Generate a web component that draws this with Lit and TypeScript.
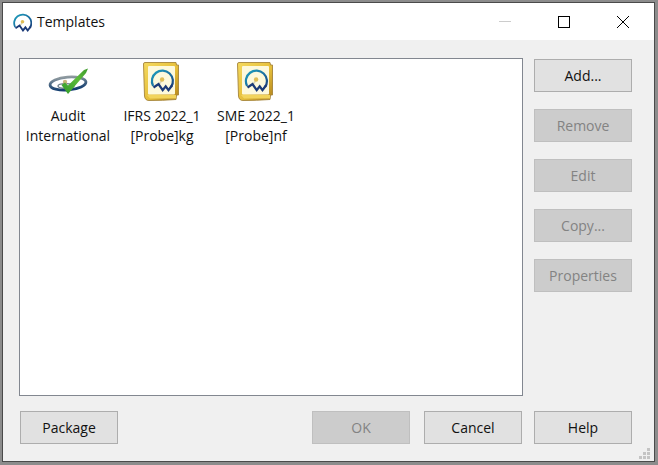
import { LitElement, html, css, svg } from 'lit'
import { customElement } from 'lit/decorators.js'

// blur keeps the icons soft, the reference ones are scaled bitmaps
const logo = (id: string) => svg`
  <defs>
    <linearGradient id=${id} x1="0" y1="0" x2="1" y2="1">
      <stop offset="0" stop-color="#1ea0bd" />
      <stop offset="0.6" stop-color="#1a6a9e" />
      <stop offset="1" stop-color="#1b3f7a" />
    </linearGradient>
  </defs>
  <path d="M4.6 20.5A10.5 10.5 0 1 1 22.6 21.5" fill="none" stroke="url(#${id})" stroke-width="2.2" />
  <path d="M13 15.5L9.5 20" stroke="#d8d4b4" stroke-width="1.6" fill="none" />
  <circle cx="13.6" cy="14" r="2.2" fill="#e0bd55" />
  <path d="M5 22L10 18.6L14.2 24.6L17.2 20.8L20 24.6L23.6 19.8" fill="none" stroke="#1b3a78" stroke-width="2.3" />
`

@customElement('templ-icon')
export class TemplIcon extends LitElement {
  static styles = css`
    :host {
      display: block;
      width: 38px;
      height: 40px;
    }
    svg {
      display: block;
    }
  `

  render() {
    return html`<svg width="38" height="40" viewBox="0 0 38 40">
      <defs>
        <linearGradient id="gold" x1="0" y1="0" x2="1" y2="1">
          <stop offset="0" stop-color="#f4d95e" />
          <stop offset="0.55" stop-color="#e6bf3a" />
          <stop offset="1" stop-color="#b0801a" />
        </linearGradient>
        <filter id="soft"><feGaussianBlur stdDeviation="0.3" /></filter>
      </defs>
      <g filter="url(#soft)">
        <path d="M0.5 2Q0.5 0.5 2 0.5H33L33.5 3H35.5V33H33.5L33 37.5Q20 38.5 6 38.5Q2 38.5 1.5 34Z" fill="url(#gold)" stroke="#a5843a" stroke-width="0.9" />
        <rect x="5" y="4" width="27" height="28.5" rx="1" fill="#fdf9dc" />
        <path d="M4 33H33V36.5H7Z" fill="#f2d45c" />
        <g transform="translate(5.5 3.5)">${logo('ring-a')}</g>
      </g>
    </svg>`
  }
}

@customElement('audit-icon')
export class AuditIcon extends LitElement {
  static styles = css`
    :host {
      display: block;
      width: 42px;
      height: 30px;
    }
    svg {
      display: block;
    }
  `

  render() {
    return html`<svg width="42" height="30" viewBox="0 0 42 30">
      <defs>
        <linearGradient id="ring" x1="0" y1="0" x2="0" y2="1">
          <stop offset="0" stop-color="#8e999f" />
          <stop offset="0.55" stop-color="#3f5f80" />
          <stop offset="1" stop-color="#123d70" />
        </linearGradient>
        <linearGradient id="tick" x1="0" y1="1" x2="1" y2="0">
          <stop offset="0" stop-color="#2f9a28" />
          <stop offset="0.6" stop-color="#5dbb3a" />
          <stop offset="1" stop-color="#3d9a2c" />
        </linearGradient>
        <filter id="soft2"><feGaussianBlur stdDeviation="0.35" /></filter>
      </defs>
      <g filter="url(#soft2)">
        <ellipse cx="21" cy="18.5" rx="18" ry="6.5" transform="rotate(-5 21 18.5)" fill="none" stroke="url(#ring)" stroke-width="2.8" />
        <ellipse cx="19" cy="21" rx="8" ry="2.4" fill="none" stroke="#6e7f8c" stroke-width="1.4" />
        <circle cx="18" cy="17" r="2.2" fill="#c9b77a" />
        <path d="M14.5 20L18 17.5L21 20.5L37 5L41 3.5L39 8L21 29Z" fill="url(#tick)" />
      </g>
    </svg>`
  }
}

@customElement('app-root')
export class AppRoot extends LitElement {
  static styles = css`
    :host {
      display: block;
      width: 658px;
      height: 465px;
      box-sizing: border-box;
      padding: 2px 3px 3px 2px;
      background: #8c8c8c;
      font-family: 'Open Sans', 'Noto Sans', sans-serif;
      font-size: 14px;
      color: #111;
    }

    .window {
      position: relative;
      display: flex;
      flex-direction: column;
      height: 100%;
      box-sizing: border-box;
      border: 1px solid #4a4a4a;
      background: #f0f0f0;
    }

    .titlebar {
      display: flex;
      align-items: center;
      height: 37px;
      flex: none;
      background: #fff;
      padding: 0 2px 0 9px;
    }

    .titlebar .app-logo {
      filter: blur(0.4px);
    }

    .titlebar .title {
      margin-left: 5px;
      font-size: 14px;
      flex: 1;
    }

    .caption {
      width: 59px;
      height: 37px;
      display: flex;
      align-items: center;
      justify-content: center;
    }

    .body {
      flex: none;
      display: grid;
      grid-template-columns: 504px 98px;
      column-gap: 11px;
      padding: 18px 0 0 16px;
      align-content: start;
    }

    .list {
      box-sizing: border-box;
      height: 338px;
      background: #fff;
      border: 1px solid #828790;
      display: flex;
      align-items: flex-start;
      padding-left: 1px;
    }

    .item {
      width: 94px;
      display: flex;
      flex-direction: column;
      align-items: center;
      text-align: center;
      line-height: 20px;
      white-space: nowrap;
    }

    .icon-slot {
      height: 47px;
      display: flex;
      align-items: flex-end;
      justify-content: center;
    }

    .icon-slot audit-icon {
      margin-bottom: 11px;
    }

    .icon-slot templ-icon {
      margin-bottom: 4px;
    }

    .side {
      display: flex;
      flex-direction: column;
      gap: 17px;
      padding-top: 1px;
    }

    button {
      box-sizing: border-box;
      width: 98px;
      height: 33px;
      margin: 0;
      padding: 0;
      border: 1px solid #adadad;
      background: #e1e1e1;
      font: inherit;
      color: #111;
    }

    button[disabled] {
      background: #cccccc;
      border-color: #bfbfbf;
      color: #838383;
    }

    .footer {
      display: flex;
      padding: 15px 22px 0 17px;
    }

    .footer .spacer {
      flex: 1;
    }

    .footer .actions {
      display: flex;
      gap: 14px;
      padding-right: 12px;
    }

    .grip {
      position: absolute;
      right: 3px;
      bottom: 1px;
    }
  `

  render() {
    return html`
      <div class="window">
        <div class="titlebar">
          <svg class="app-logo" width="20" height="20" viewBox="1.5 2 23 24.5">${logo('ring-t')}</svg>
          <span class="title">Templates</span>
          <div class="caption">
            <svg width="12" height="2"><rect width="12" height="1" fill="#cccccc" /></svg>
          </div>
          <div class="caption">
            <svg width="12" height="12"><rect x="0.5" y="0.5" width="11" height="11" fill="none" stroke="#000" /></svg>
          </div>
          <div class="caption">
            <svg width="12" height="12"><path d="M0 0L12 12M12 0L0 12" stroke="#000" stroke-width="1" /></svg>
          </div>
        </div>
        <div class="body">
          <div class="list">
            <div class="item">
              <div class="icon-slot"><audit-icon></audit-icon></div>
              <span>Audit</span><span>International</span>
            </div>
            <div class="item">
              <div class="icon-slot"><templ-icon></templ-icon></div>
              <span>IFRS 2022_1</span><span>[Probe]kg</span>
            </div>
            <div class="item">
              <div class="icon-slot"><templ-icon></templ-icon></div>
              <span>SME 2022_1</span><span>[Probe]nf</span>
            </div>
          </div>
          <div class="side">
            <button>Add...</button>
            <button disabled>Remove</button>
            <button disabled>Edit</button>
            <button disabled>Copy...</button>
            <button disabled>Properties</button>
          </div>
        </div>
        <div class="footer">
          <button>Package</button>
          <div class="spacer"></div>
          <div class="actions">
            <button disabled>OK</button>
            <button>Cancel</button>
          </div>
          <button>Help</button>
        </div>
        <svg class="grip" width="12" height="12" fill="#c4c4c4">
          <rect x="8" y="0" width="3" height="3" />
          <rect x="4" y="4" width="3" height="3" />
          <rect x="8" y="4" width="3" height="3" />
          <rect x="0" y="8" width="3" height="3" />
          <rect x="4" y="8" width="3" height="3" />
          <rect x="8" y="8" width="3" height="3" />
        </svg>
      </div>
    `
  }
}
